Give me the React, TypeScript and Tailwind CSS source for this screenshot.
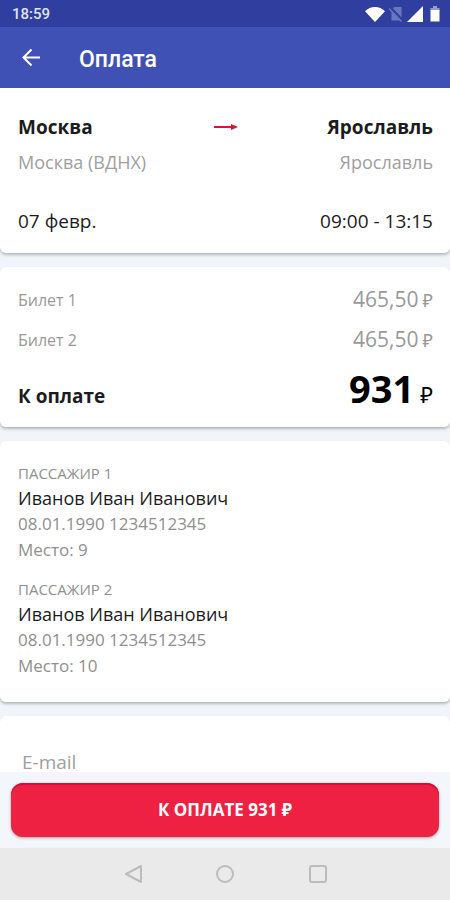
import type { ReactNode } from "react";

const tickets = [
  { name: "Билет 1", price: "465,50" },
  { name: "Билет 2", price: "465,50" },
];

const passengers = [
  {
    title: "ПАССАЖИР 1",
    name: "Иванов Иван Иванович",
    document: "08.01.1990 1234512345",
    seat: "Место: 9",
  },
  {
    title: "ПАССАЖИР 2",
    name: "Иванов Иван Иванович",
    document: "08.01.1990 1234512345",
    seat: "Место: 10",
  },
];

function StatusBar() {
  return (
    <div className="flex h-[27px] shrink-0 items-center justify-between bg-[#303f9f] pr-[6px] pl-3 font-['Roboto',sans-serif] text-[15px] font-medium text-[#dfe3f8]">
      <span className="pt-[2px]">18:59</span>
      <div className="flex items-center gap-[3px]">
        <svg width="20" height="16" viewBox="0 0 20 16" fill="#fff">
          <path d="M0 5.2C2.800 2.500 6.200 1 10 1s7.200 1.500 10 4.200L10 16Z" />
        </svg>
        <svg width="16" height="16" viewBox="0 0 16 16">
          <path d="M6 1h7.500v13.500H3.500V4Z" fill="#6a77c0" />
          <path d="M1.500 1 15 15" stroke="#303f9f" strokeWidth="3" />
          <path d="M1 2.500 13.500 15.500" stroke="#6a77c0" strokeWidth="1.500" />
        </svg>
        <svg width="16" height="16" viewBox="0 0 16 16" fill="#fff">
          <path d="M16 0v16H0Z" />
        </svg>
        <svg width="18" height="16" viewBox="0 0 18 16">
          <path d="M7 0h4v2h2.500v3h-9V2H7Z" fill="#929bd2" />
          <path d="M4.500 4h9v11.500h-9Z" fill="#fff" />
        </svg>
      </div>
    </div>
  );
}

function Header() {
  return (
    <header className="flex h-[61px] shrink-0 items-center bg-[#3f51b5] pl-5 text-white">
      <button type="button" aria-label="Назад" className="w-[59px]">
        <svg width="22" height="20" viewBox="0 0 22 20" fill="none" stroke="#fff" strokeWidth="2">
          <path d="M20 9.500H4M11.500 1.500 3.500 9.500l8 8" />
        </svg>
      </button>
      <h1 className="pt-1 font-['Roboto',sans-serif] text-[23px] leading-7 font-medium">Оплата</h1>
    </header>
  );
}

function Card({ className, children }: { className: string; children: ReactNode }) {
  return (
    <section className={`shrink-0 rounded-md bg-white pr-[17px] pl-[18px] shadow-[0_2px_3px_rgba(0,0,0,0.25)] ${className}`}>
      {children}
    </section>
  );
}

function NavBar() {
  return (
    <nav className="grid h-[52px] shrink-0 grid-cols-[1fr_92px_92px_92px_1fr] items-center justify-items-center bg-[#eaeaea]">
      <button type="button" aria-label="Назад" className="col-start-2">
        <svg width="20" height="20" viewBox="0 0 20 20" fill="none" stroke="#bcbcbc" strokeWidth="2" strokeLinejoin="round">
          <path d="M18 2v16L3 10Z" />
        </svg>
      </button>
      <button type="button" aria-label="Домой">
        <svg width="20" height="20" viewBox="0 0 20 20" fill="none" stroke="#bcbcbc" strokeWidth="2">
          <circle cx="10" cy="10" r="8" />
        </svg>
      </button>
      <button type="button" aria-label="Недавние">
        <svg width="20" height="20" viewBox="0 0 20 20" fill="none" stroke="#bcbcbc" strokeWidth="2">
          <rect x="3" y="2" width="16" height="16" rx="2" />
        </svg>
      </button>
    </nav>
  );
}

export default function App() {
  return (
    <div className="flex h-screen flex-col bg-[#f1f5f9] font-['Open_Sans','Noto_Sans',sans-serif] text-[#1c1c1c]">
      <StatusBar />
      <Header />
      <main className="flex min-h-0 flex-1 flex-col gap-[14px] overflow-y-auto [scrollbar-width:none]">
        <Card className="rounded-t-none pt-6 pb-4">
          <div className="flex items-center justify-between text-[19px] leading-[30px] font-bold">
            <span className="flex-1">Москва</span>
            <svg width="24" height="8" viewBox="0 0 24 8">
              <path d="M0 4h19" stroke="#d8143a" strokeWidth="2" />
              <path d="M17 1 24 4l-7 3Z" fill="#d8143a" />
            </svg>
            <span className="flex-1 text-right">Ярославль</span>
          </div>
          <div className="mt-1 flex justify-between text-[18px] leading-8 text-[#a0a0a0]">
            <span>Москва (ВДНХ)</span>
            <span>Ярославль</span>
          </div>
          <div className="mt-7 flex justify-between text-[19px] leading-[31px]">
            <span>07 февр.</span>
            <span>09:00 - 13:15</span>
          </div>
        </Card>

        <Card className="pt-[13px] pb-[11px]">
          {tickets.map((ticket) => (
            <div key={ticket.name} className="flex h-10 items-center justify-between text-[#999]">
              <span className="text-[16px]">{ticket.name}</span>
              <span className="flex items-baseline gap-1 text-[21px]">
                {ticket.price}
                <span className="text-[18px] leading-none">₽</span>
              </span>
            </div>
          ))}
          <div className="flex items-baseline justify-between">
            <span className="text-[19px] leading-none font-bold">К оплате</span>
            <span className="flex items-baseline gap-[6px] text-[38px] leading-[56px] font-bold text-black">
              931
              <span className="text-[22px] leading-none font-normal">₽</span>
            </span>
          </div>
        </Card>

        <Card className="flex flex-col gap-[14px] pt-5 pb-[23px]">
          {passengers.map((passenger) => (
            <div key={passenger.title} className="text-[17px] leading-[26px] text-[#8f8f8f]">
              <h2 className="text-[15px] leading-6">{passenger.title}</h2>
              <p className="text-[18px] text-[#1c1c1c]">{passenger.name}</p>
              <p>{passenger.document}</p>
              <p>{passenger.seat}</p>
            </div>
          ))}
        </Card>

        <Card className="rounded-b-none pt-8">
          <input
            type="email"
            aria-label="E-mail"
            placeholder="E-mail"
            className="block h-7 w-full px-1 text-[19px] outline-none placeholder:text-[#a0a0a0]"
          />
        </Card>
      </main>
      <div className="z-10 shrink-0 bg-[#f3f7fb] px-[11px] py-[11px]">
        <button
          type="button"
          className="h-[54px] w-full rounded-xl bg-[#ee2143] text-[17px] font-bold text-white shadow-[0_1px_3px_rgba(0,0,0,0.35),inset_0_2px_0_#d90d3a]"
        >
          К ОПЛАТЕ 931 ₽
        </button>
      </div>
      <NavBar />
    </div>
  );
}
